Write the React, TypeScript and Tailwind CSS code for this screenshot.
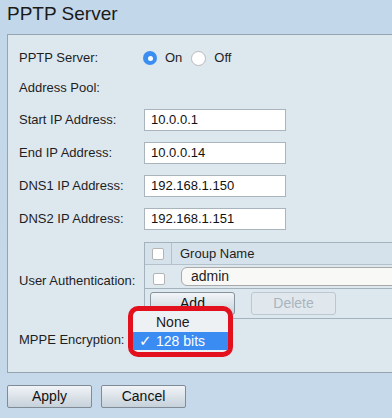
import React from 'react';

function Field({ label, value, className = '' }: { label: string; value: string; className?: string }) {
  return (
    <div className={`flex h-[22px] items-center ${className}`}>
      <span className="w-[125px] shrink-0">{label}</span>
      <div className="flex h-[22px] w-[142px] items-center border border-[#a9b4bd] bg-white pl-[6px] text-[13px] text-[#111]">
        {value}
      </div>
    </div>
  );
}

function Checkbox() {
  return <div className="h-[12px] w-[12px] rounded-[2px] border border-[#b4b4b4] bg-white" />;
}

function Radio({ checked }: { checked?: boolean }) {
  if (checked) {
    return (
      <div className="flex h-[14px] w-[14px] items-center justify-center rounded-full bg-[#3a8ef1]">
        <div className="h-[5px] w-[5px] rounded-full bg-white" />
      </div>
    );
  }
  return <div className="h-[15px] w-[15px] rounded-full border border-[#b9b9b9] bg-white" />;
}

export default function App() {
  return (
    <div className="h-[418px] w-[392px] overflow-hidden bg-gradient-to-b from-[#c2d7ea] to-[#c6d9ea] font-['Liberation_Sans',Arial,sans-serif] text-[13px] text-[#1e1e1e]">
      <h1 className="h-[34px] pl-[7px] pt-[3px] text-[19px] leading-[22px] text-[#1a1a1a]">PPTP Server</h1>

      <div className="ml-[7px] w-[420px] border border-[#96a4af] bg-[#dde7ee] pb-[21px] pl-[11px] pt-[12px]">
        {/* PPTP Server */}
        <div className="flex h-[22px] items-center">
          <span className="w-[124px] shrink-0">PPTP Server:</span>
          <Radio checked />
          <span className="ml-[8px]">On</span>
          <div className="ml-[9px]">
            <Radio />
          </div>
          <span className="ml-[8px]">Off</span>
        </div>

        <div className="mt-[8px] flex h-[22px] items-center">Address Pool:</div>

        <Field className="mt-[10px]" label="Start IP Address:" value="10.0.0.1" />
        <Field className="mt-[11px]" label="End IP Address:" value="10.0.0.14" />
        <Field className="mt-[11px]" label="DNS1 IP Address:" value="192.168.1.150" />
        <Field className="mt-[11px]" label="DNS2 IP Address:" value="192.168.1.151" />

        {/* User Authentication */}
        <div className="mt-[12px] flex items-center">
          <span className="w-[125px] shrink-0">User Authentication:</span>
          <div className="w-[300px] border-y border-l border-[#a4b2bd]">
            <div className="flex h-[22px] items-center border-b border-[#b4c1cb] bg-[#d6e2eb]">
              <div className="flex h-full w-[27px] items-center justify-center border-r border-[#b4c1cb]">
                <Checkbox />
              </div>
              <span className="pl-[8px]">Group Name</span>
            </div>
            <div className="flex h-[24px] items-center border-b border-[#a4b2bd]">
              <div className="flex w-[27px] justify-center pt-[4px]">
                <Checkbox />
              </div>
              <div className="ml-[9px] flex h-[19px] flex-1 items-center rounded-l-[6px] border border-[#a9a9a9] bg-[#f8f8f6] pl-[9px] text-[14px]">
                admin
              </div>
            </div>
            <div className="flex h-[29px] items-start gap-[16px] pl-[5px] pt-[3px]">
              <button className="h-[23px] w-[85px] rounded-[3px] border border-[#86929c] bg-gradient-to-b from-[#f2f5f8] to-[#c8d3dc] text-[14px] text-[#111]">
                Add
              </button>
              <button className="h-[23px] w-[85px] rounded-[3px] border border-[#bcc8d1] bg-[#e0e8ee] text-[14px] text-[#a9b4bd]">
                Delete
              </button>
            </div>
          </div>
        </div>

        {/* MPPE Encryption */}
        <div className="relative mt-[10px] flex h-[22px] items-center">
          <span>MPPE Encryption:</span>
          <div className="absolute left-[109px] top-[-23px] h-[51px] w-[105px] rounded-[10px] border-[5px] border-[#e3111d] bg-[#eef1f4] pt-[2px] text-[14px]">
            <div className="flex h-[18px] items-center pl-[23px] text-[#1a1a1a]">None</div>
            <div className="mt-[1px] flex h-[18px] items-center bg-[#3a8cf2] text-white">
              <span className="w-[23px] pl-[6px] font-['DejaVu_Sans',sans-serif] text-[15px] font-bold leading-[18px]">✓</span>
              <span>128 bits</span>
            </div>
          </div>
        </div>
      </div>

      <div className="mt-[12px] flex gap-[9px] pl-[7px]">
        <button className="h-[23px] w-[85px] rounded-[2px] border border-[#7f8c97] bg-gradient-to-b from-[#f1f4f7] to-[#c6d1da] text-[14px] text-[#111]">
          Apply
        </button>
        <button className="h-[23px] w-[85px] rounded-[2px] border border-[#7f8c97] bg-gradient-to-b from-[#f1f4f7] to-[#c6d1da] text-[14px] text-[#111]">
          Cancel
        </button>
      </div>
    </div>
  );
}
